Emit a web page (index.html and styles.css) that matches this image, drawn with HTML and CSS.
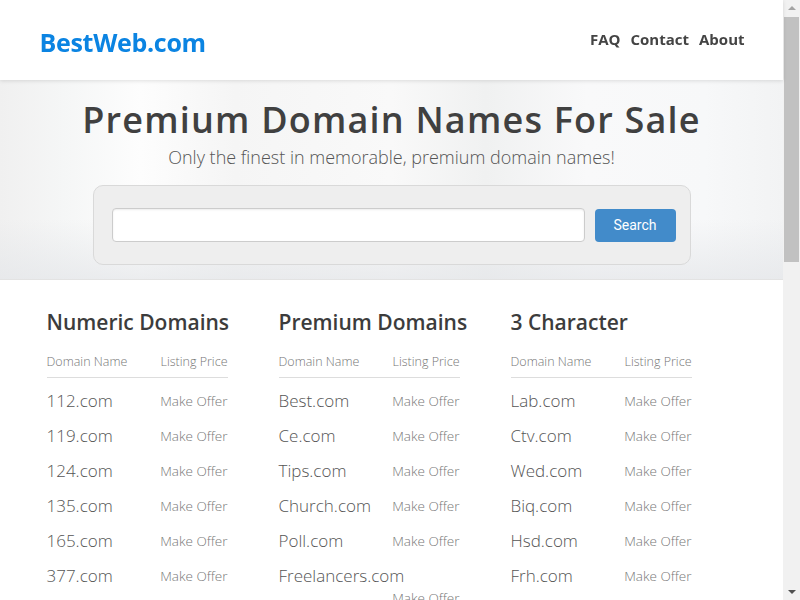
FILE: index.html
```html
<!DOCTYPE html>
<html>
<head>
<meta charset="utf-8">
<title>BestWeb.com</title>
<link rel="stylesheet" href="styles.css">
</head>
<body>
<div class="page">
<header class="topbar">
  <div class="container topbar-inner">
    <a class="logo" href="#">BestWeb.com</a>
    <nav class="nav">
      <a href="#">FAQ</a>
      <a href="#">Contact</a>
      <a href="#">About</a>
    </nav>
  </div>
</header>
<section class="hero">
  <h1 class="hero-title">Premium Domain Names For Sale</h1>
  <p class="hero-sub">Only the finest in memorable, premium domain names!</p>
  <form class="well">
    <input class="search-input" type="text">
    <button class="search-btn" type="button">Search</button>
  </form>
</section>
<main class="container listings">
  <div class="col">
    <h2 class="col-title">Numeric Domains</h2>
    <div class="thead"><span>Domain Name</span><span>Listing Price</span></div>
    <div class="row"><span class="dom">112.com</span><span class="price">Make Offer</span></div>
    <div class="row"><span class="dom">119.com</span><span class="price">Make Offer</span></div>
    <div class="row"><span class="dom">124.com</span><span class="price">Make Offer</span></div>
    <div class="row"><span class="dom">135.com</span><span class="price">Make Offer</span></div>
    <div class="row"><span class="dom">165.com</span><span class="price">Make Offer</span></div>
    <div class="row"><span class="dom">377.com</span><span class="price">Make Offer</span></div>
    <div class="row"><span class="dom">512.com</span><span class="price">Make Offer</span></div>
    <div class="row"><span class="dom">868.com</span><span class="price">Make Offer</span></div>
  </div>
  <div class="col">
    <h2 class="col-title">Premium Domains</h2>
    <div class="thead"><span>Domain Name</span><span>Listing Price</span></div>
    <div class="row"><span class="dom">Best.com</span><span class="price">Make Offer</span></div>
    <div class="row"><span class="dom">Ce.com</span><span class="price">Make Offer</span></div>
    <div class="row"><span class="dom">Tips.com</span><span class="price">Make Offer</span></div>
    <div class="row"><span class="dom">Church.com</span><span class="price">Make Offer</span></div>
    <div class="row"><span class="dom">Poll.com</span><span class="price">Make Offer</span></div>
    <div class="row"><span class="dom">Freelancers.com</span><span class="price">Make Offer</span></div>
    <div class="row"><span class="dom">Mail.com</span><span class="price">Make Offer</span></div>
  </div>
  <div class="col">
    <h2 class="col-title">3 Character</h2>
    <div class="thead"><span>Domain Name</span><span>Listing Price</span></div>
    <div class="row"><span class="dom">Lab.com</span><span class="price">Make Offer</span></div>
    <div class="row"><span class="dom">Ctv.com</span><span class="price">Make Offer</span></div>
    <div class="row"><span class="dom">Wed.com</span><span class="price">Make Offer</span></div>
    <div class="row"><span class="dom">Biq.com</span><span class="price">Make Offer</span></div>
    <div class="row"><span class="dom">Hsd.com</span><span class="price">Make Offer</span></div>
    <div class="row"><span class="dom">Frh.com</span><span class="price">Make Offer</span></div>
    <div class="row"><span class="dom">Vkt.com</span><span class="price">Make Offer</span></div>
    <div class="row"><span class="dom">Zpq.com</span><span class="price">Make Offer</span></div>
  </div>
</main>
</div>
<div class="scrollbar" aria-hidden="true">
  <div class="sb-arrow sb-up"></div>
  <div class="sb-thumb"></div>
  <div class="sb-arrow sb-down"></div>
</div>
</body>
</html>
```
FILE: styles.css
```css
html, body {
  margin: 0;
  padding: 0;
}
html::-webkit-scrollbar { display: none; }
body {
  font-family: "Open Sans", "Liberation Sans", sans-serif;
  color: #444;
  background: #fff;
}
a { text-decoration: none; }

.page {
  width: 783px;
}

.container {
  width: 704px;
  margin: 0 auto;
}

.topbar {
  position: relative;
  z-index: 2;
  height: 80px;
  background: #fff;
  box-shadow: 0 1px 4px rgba(0, 0, 0, 0.12);
}
.topbar-inner {
  height: 80px;
  display: flex;
  align-items: center;
  justify-content: space-between;
}
.logo {
  font-family: "Open Sans", sans-serif;
  font-weight: 700;
  font-size: 25px;
  color: #0b84e2;
  letter-spacing: -0.3px;
  margin-top: 3px;
}
.nav {
  display: flex;
  gap: 10px;
  margin-right: -1px;
  margin-bottom: 2px;
}
.nav a {
  font-weight: 700;
  font-size: 15px;
  color: #444;
}

.hero {
  height: 200px;
  background:
    linear-gradient(180deg, rgba(255,255,255,0) 70%, rgba(228,230,233,0.7) 100%),
    linear-gradient(90deg, #f0f0f0 0%, #f5f6f6 8%, #fdfdfd 18%, #f5f5f5 30%, #f9f9f9 50%, #f0f1f1 62%, #f9f9fa 75%, #f7f8f9 90%, #f2f3f4 100%);
  text-align: center;
  padding-top: 16px;
  box-sizing: border-box;
  border-bottom: 1px solid #e3e3e3;
}
.hero-title {
  margin: 0;
  font-family: "Open Sans", sans-serif;
  font-weight: 600;
  font-size: 36px;
  line-height: 48px;
  letter-spacing: 1.2px;
  color: #404040;
}
.hero-sub {
  margin: 0;
  font-weight: 300;
  font-size: 18px;
  line-height: 26px;
  color: #555;
}
.well {
  width: 598px;
  height: 80px;
  margin: 15px auto 0;
  box-sizing: border-box;
  background: #eeeeee;
  border: 1px solid #d9d9d9;
  border-radius: 10px;
  display: flex;
  align-items: center;
  padding: 0 14px 0 18px;
  gap: 10px;
}
.search-input {
  flex: 1;
  height: 34px;
  box-sizing: border-box;
  border: 1px solid #ccc;
  border-radius: 4px;
  background: #fff;
  box-shadow: inset 0 1px 2px rgba(0,0,0,0.08);
  margin: 0;
}
.search-btn {
  width: 81px;
  height: 33px;
  border: none;
  border-radius: 4px;
  background: #428bca;
  color: #fff;
  font-family: Roboto, "Liberation Sans", sans-serif;
  font-size: 14px;
  margin: 0;
  padding: 0;
}

.listings {
  display: grid;
  grid-template-columns: repeat(3, 232px);
  padding: 23px 0 40px 7px;
  box-sizing: border-box;
}
.col {
  width: 181px;
}
.col-title {
  margin: 0;
  font-weight: 600;
  font-size: 21px;
  line-height: 38px;
  color: #3c3c3c;
  white-space: nowrap;
}
.thead {
  display: flex;
  justify-content: space-between;
  font-weight: 300;
  font-size: 12.5px;
  line-height: 20px;
  color: #777;
  padding: 11px 0 5px;
  border-bottom: 1px solid #ddd;
  margin-bottom: 6px;
}
.row {
  display: flex;
  flex-wrap: wrap;
  align-items: center;
  justify-content: space-between;
  padding: 6px 0 7px;
}
.dom {
  font-weight: 300;
  font-size: 17px;
  line-height: 22px;
  color: #555;
}
.price {
  margin-left: auto;
  font-weight: 300;
  font-size: 13.5px;
  line-height: 22px;
  color: #777;
}

.scrollbar {
  position: fixed;
  top: 0;
  right: 0;
  width: 17px;
  height: 100%;
  background: #f1f1f1;
  display: flex;
  flex-direction: column;
  align-items: center;
}
.sb-arrow {
  width: 0;
  height: 0;
  border-left: 4px solid transparent;
  border-right: 4px solid transparent;
}
.sb-up {
  margin-top: 6px;
  border-bottom: 4px solid #a3a3a3;
}
.sb-down {
  position: absolute;
  bottom: 6px;
  border-top: 4px solid #505050;
}
.sb-thumb {
  margin-top: 7px;
  width: 15px;
  height: 245px;
  background: #c1c1c1;
}
```
